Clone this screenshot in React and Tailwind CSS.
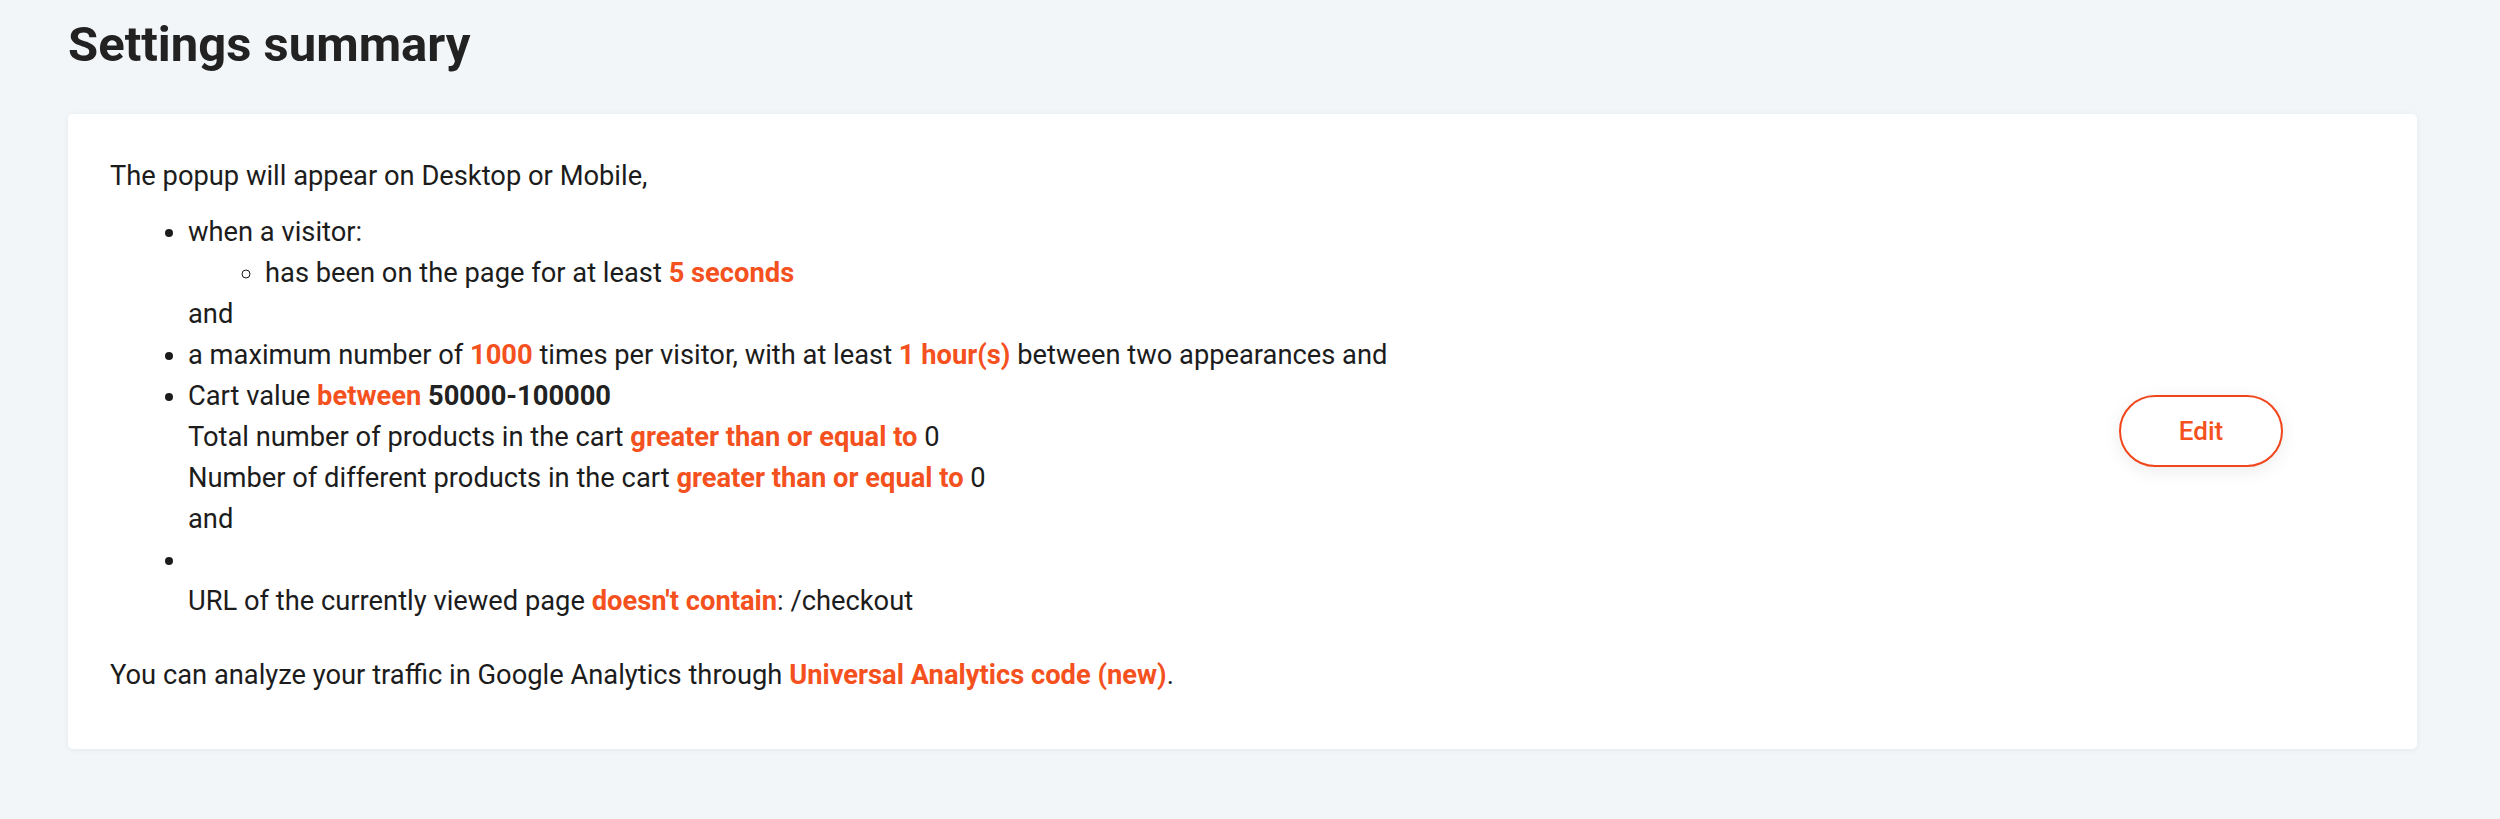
const Hl = ({ children }) => (
  <span className="font-bold text-[#f4511e]">{children}</span>
);

export default function App() {
  return (
    <div className="min-h-screen bg-[#f3f6f9] font-['Roboto',sans-serif] text-[#1c1c1c]">
      <div className="pl-[68px] pt-[16px]">
        <h1 className="text-[49px] font-bold leading-[57.6px] text-[#222222]">
          Settings summary
        </h1>
        <div className="mt-[40px] flex w-[2349px] items-center rounded-[5px] bg-white pl-[42px] pr-[134px] shadow-[0_1px_6px_rgba(0,0,0,0.06)]">
          <div className="flex-1 pt-[42px] pb-[53px] text-[27.3px] leading-[41px]">
            <p>The popup will appear on Desktop or Mobile,</p>
            <ul className="mt-[15px] mb-[33px] list-disc pl-[78px]">
              <li>
                when a visitor:
                <ul className="list-[circle] pl-[77px]">
                  <li>
                    has been on the page for at least <Hl>5 seconds</Hl>
                  </li>
                </ul>
                and
              </li>
              <li>
                a maximum number of <Hl>1000</Hl> times per visitor, with at
                least <Hl>1 hour(s)</Hl> between two appearances and
              </li>
              <li>
                Cart value <Hl>between</Hl>{" "}
                <span className="font-bold text-[#222222]">50000-100000</span>
                <br />
                Total number of products in the cart{" "}
                <Hl>greater than or equal to</Hl> 0
                <br />
                Number of different products in the cart{" "}
                <Hl>greater than or equal to</Hl> 0
                <br />
                and
              </li>
              <li>
                <br />
                URL of the currently viewed page <Hl>doesn't contain</Hl>:
                /checkout
              </li>
            </ul>
            <p>
              You can analyze your traffic in Google Analytics through{" "}
              <Hl>Universal Analytics code (new)</Hl>.
            </p>
          </div>
          <button className="h-[72px] w-[164px] rounded-full border-2 border-[#f1461c] bg-white text-[26px] font-medium text-[#f4511e] shadow-[0_4px_18px_rgba(0,0,0,0.08)]">
            Edit
          </button>
        </div>
      </div>
    </div>
  );
}
